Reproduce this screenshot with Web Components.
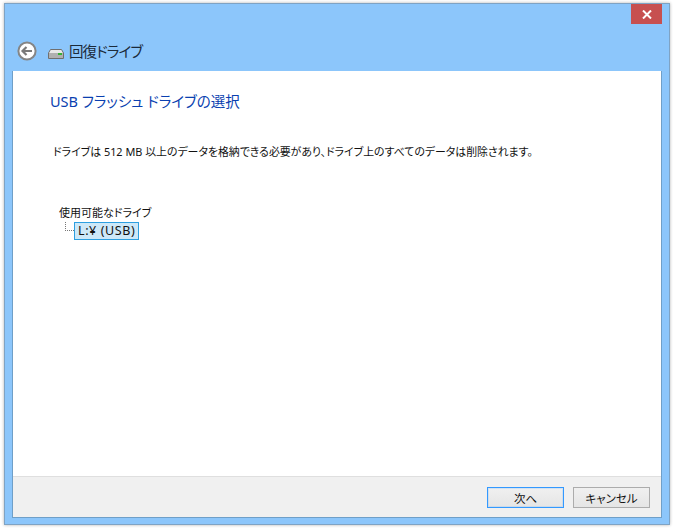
<!DOCTYPE html>
<html lang="ja">
<head>
<meta charset="utf-8">
<title>回復ドライブ</title>
<style>
  html, body { margin: 0; height: 100%; background: #fff; }
  body { font-family: "Noto Sans", "Noto Sans CJK JP", sans-serif; font-feature-settings: "palt"; }
</style>
</head>
<body>
<wizard-window>
  <wizard-step heading="USB フラッシュ ドライブの選択">
    <p>ドライブは 512 MB 以上のデータを格納できる必要があり、ドライブ上のすべてのデータは削除されます。</p>
    <drive-tree label="使用可能なドライブ" drive="L:¥ (USB)"></drive-tree>
  </wizard-step>
  <wizard-button slot="footer" primary>次へ</wizard-button>
  <wizard-button slot="footer">キャンセル</wizard-button>
</wizard-window>

<script>
class WizardWindow extends HTMLElement {
  constructor() {
    super();
    this.attachShadow({ mode: "open" }).innerHTML = `
<style>
  :host {
    display: flex;
    flex-flow: column;
    box-sizing: border-box;
    width: 666px;
    height: 522px;
    margin: 3px 0 0 4px;
    background: #8cc6fb;
    border: 1px solid #7fa3c4;
    box-shadow: 0 0 3px rgba(0, 0, 0, .3);
  }
  .close { display: flex; justify-content: flex-end; height: 20px; padding-right: 7px; }
  .close div {
    display: flex; align-items: center; justify-content: center;
    width: 31px; height: 20px; background: #c75050;
  }
  .nav { display: flex; align-items: center; height: 47px; padding: 6px 0 0 12px; box-sizing: border-box; }
  .title { font-size: 14.5px; letter-spacing: -.9px; color: #1b2a3a; margin: -1px 0 0 5px; }
  .back { margin-right: 11px; }
  .drive { margin-top: 6px; }
  .panel {
    flex: 1; display: flex; flex-flow: column; min-height: 0;
    margin: 0 7px 6px 7px; background: #fff; border: 1px solid #6f9fc8; border-top: 0;
  }
  .content { flex: 1; min-height: 0; }
  .footer {
    display: flex; justify-content: flex-end; gap: 9px; height: 41px; box-sizing: border-box;
    padding: 10px 11px 0 0; background: #f0f0f0; border-top: 1px solid #dfdfdf;
  }
</style>
<div class="close"><div>
  <svg width="10" height="9" viewBox="0 0 10 9"><path d="M1 .5 9 8.5M9 .5 1 8.5" stroke="#fff" stroke-width="2" fill="none"/></svg>
</div></div>
<div class="nav">
  <svg class="back" width="20" height="20" viewBox="0 0 20 20">
    <circle cx="10" cy="10" r="8.6" fill="#fff" stroke="#858585" stroke-width="2"/>
    <path d="M15 10H6M9.5 6 5.5 10l4 4" fill="none" stroke="#7a7a7a" stroke-width="2.2"/>
  </svg>
  <svg class="drive" width="16" height="10" viewBox="0 0 16 10">
    <path d="M2.5.5h11L15.5 4v5.5H.5V4z" fill="#e8e8e8" stroke="#6f6f6f"/>
    <rect x="1" y="4" width="14" height="5" fill="#b0b0b0"/>
    <rect x="10" y="4" width="4" height="2" fill="#35b035"/>
  </svg>
  <span class="title">回復ドライブ</span>
</div>
<div class="panel">
  <div class="content"><slot></slot></div>
  <div class="footer"><slot name="footer"></slot></div>
</div>`;
  }
}

class WizardStep extends HTMLElement {
  constructor() {
    super();
    this.attachShadow({ mode: "open" }).innerHTML = `
<style>
  :host { display: block; padding: 19px 0 0 37px; }
  h1 { margin: 0; font-size: 14.5px; font-weight: 400; line-height: 22px; color: #0a3fb0; }
  ::slotted(p) { margin: 31px 0 0 3px; font-size: 10.9px; line-height: 18px; color: #111; white-space: nowrap; }
</style>
<h1></h1>
<slot></slot>`;
    this.shadowRoot.querySelector("h1").textContent = this.getAttribute("heading");
  }
}

class DriveTree extends HTMLElement {
  constructor() {
    super();
    this.attachShadow({ mode: "open" }).innerHTML = `
<style>
  :host { display: block; margin: 44px 0 0 9px; font-size: 11px; color: #111; }
  .label { line-height: 16px; }
  .row { display: flex; align-items: flex-start; margin-left: 6px; margin-top: 1px; }
  .line { width: 8px; height: 8px; border-left: 1px dotted #777; border-bottom: 1px dotted #777; }
  .item {
    padding: 0 3px; line-height: 16px; font-size: 12.5px; letter-spacing: .6px;
    background: #cde8f8; border: 1px solid #2d9fe0; color: #111;
  }
</style>
<div class="label"></div>
<div class="row"><div class="line"></div><div class="item"></div></div>`;
    this.shadowRoot.querySelector(".label").textContent = this.getAttribute("label");
    this.shadowRoot.querySelector(".item").textContent = this.getAttribute("drive");
  }
}

class WizardButton extends HTMLElement {
  constructor() {
    super();
    this.attachShadow({ mode: "open" }).innerHTML = `
<style>
  :host {
    display: flex; align-items: center; justify-content: center; box-sizing: border-box;
    width: 77px; height: 21px; font-size: 11.5px; color: #111;
    background: linear-gradient(#f0f0f0, #e5e5e5); border: 1px solid #acacac;
  }
  :host([primary]) { border: 1px solid #3399ff; box-shadow: inset 0 0 0 1px rgba(51, 153, 255, .15); }
</style>
<slot></slot>`;
  }
}

customElements.define("wizard-window", WizardWindow);
customElements.define("wizard-step", WizardStep);
customElements.define("drive-tree", DriveTree);
customElements.define("wizard-button", WizardButton);
</script>
</body>
</html>
